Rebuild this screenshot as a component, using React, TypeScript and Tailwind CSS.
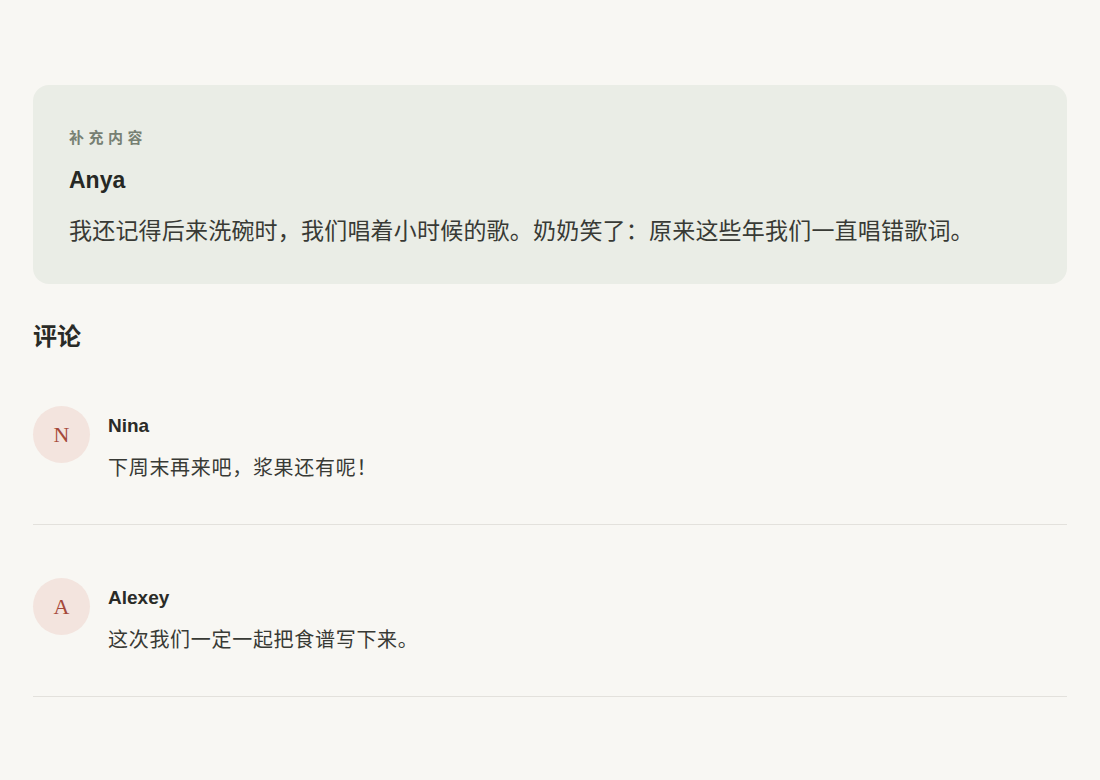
const SANS = "font-['Liberation_Sans','Noto_Sans_CJK_SC',sans-serif]"

interface Comment {
  name: string
  text: string
}

const COMMENTS: Comment[] = [
  { name: 'Nina', text: '下周末再来吧，浆果还有呢！' },
  { name: 'Alexey', text: '这次我们一定一起把食谱写下来。' },
]

function Avatar({ name }: { name: string }) {
  return (
    <div className="shrink-0 size-[57px] rounded-full bg-[#f3e4de] flex items-center justify-center">
      <span className="font-['Liberation_Serif',serif] text-[22px] leading-none text-[#a5493a]">
        {name.charAt(0)}
      </span>
    </div>
  )
}

export default function App() {
  return (
    <div className={`min-h-[780px] bg-[#f8f7f3] px-[33px] pt-[85px] pb-10 ${SANS}`}>
      {/* Added note */}
      <section className="rounded-2xl bg-[#eaede6] px-9 pt-[43px] pb-[36px]">
        <div className="text-[15px] leading-5 font-bold tracking-[0.3em] text-[#778073]">补充内容</div>
        <div className="mt-[18px] text-[23px] leading-7 font-bold text-[#262824]">Anya</div>
        <p className="mt-5 text-[23px] leading-[34px] tracking-[0.2px] text-[#383a35]">
          我还记得后来洗碗时，我们唱着小时候的歌。奶奶笑了：原来这些年我们一直唱错歌词。
        </p>
      </section>

      {/* Comments */}
      <h2 className="mt-[37px] text-[24px] leading-8 font-bold text-[#2a2b27]">评论</h2>
      <ul>
        {COMMENTS.map((c) => (
          <li key={c.name} className="flex gap-[18px] pt-[53px] pb-[41px] border-b border-[#e3e1dc]">
            <Avatar name={c.name} />
            <div className="pt-[7px]">
              <div className="text-[19px] leading-[26px] font-bold text-[#2a2b27]">{c.name}</div>
              <p className="mt-[14px] text-[20px] leading-[30px] tracking-[0.7px] text-[#383a35]">{c.text}</p>
            </div>
          </li>
        ))}
      </ul>
    </div>
  )
}
